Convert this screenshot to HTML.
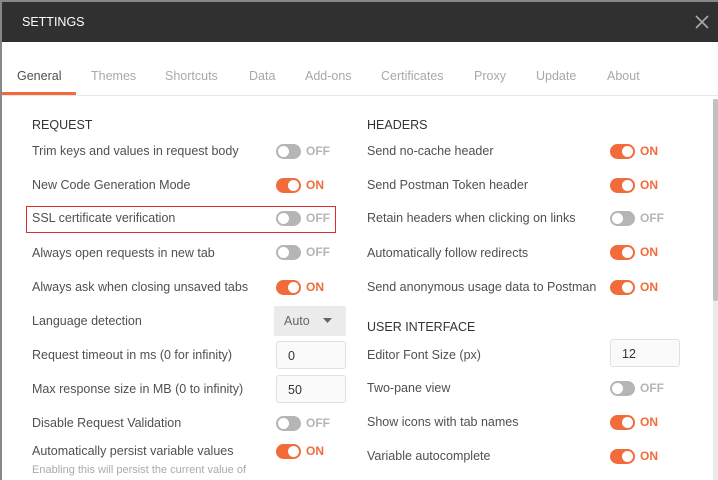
<!DOCTYPE html>
<html><head><style>
*{margin:0;padding:0;box-sizing:border-box}
body{width:718px;height:480px;overflow:hidden;background:#fff;font-family:"Liberation Sans",sans-serif;position:relative}
.a{position:absolute;white-space:nowrap}
.lb{font-size:12.5px;color:#505050}
.h{font-size:12.5px;color:#333}
.tab{font-size:12.5px;color:#a8a8a8;top:69px}
.tg{position:absolute;width:25px;height:15px;border-radius:8px}
.tg.on{background:#f26b3a}.tg.off{background:#b5b5b5}
.tg::after{content:"";position:absolute;top:2px;width:11px;height:11px;border-radius:50%;background:#fff}
.tg.on::after{right:2px}.tg.off::after{left:2px}
.st{position:absolute;font-size:12px;font-weight:bold}
.st.on{color:#f26b3a}.st.off{color:#b5b5b5}
.inp{position:absolute;width:70px;height:28px;border:1px solid #e0e0e0;background:#fafafa;border-radius:3px;font-size:12.5px;color:#333;padding:7px 0 0 11px}
</style></head><body>
<div class="a" style="left:0;top:0;width:2px;height:480px;background:#888"></div>
<div class="a" style="left:0;top:0;width:718px;height:2px;background:#888"></div>
<div class="a" style="left:2px;top:2px;width:716px;height:40px;background:#303030"></div>
<div class="a" style="left:22px;top:15px;color:#fff;font-size:12.5px">SETTINGS</div>
<svg class="a" style="left:695px;top:15px" width="14" height="14"><path d="M1 1L13 13M13 1L1 13" stroke="#aaa" stroke-width="1.6"/></svg>
<div class="a tab" style="left:17px;color:#505050">General</div>
<div class="a tab" style="left:91px">Themes</div>
<div class="a tab" style="left:165px">Shortcuts</div>
<div class="a tab" style="left:249px">Data</div>
<div class="a tab" style="left:305px">Add-ons</div>
<div class="a tab" style="left:381px">Certificates</div>
<div class="a tab" style="left:474px">Proxy</div>
<div class="a tab" style="left:536px">Update</div>
<div class="a tab" style="left:607px">About</div>
<div class="a" style="left:2px;top:95px;width:716px;height:1px;background:#e6e6e6"></div>
<div class="a" style="left:2px;top:92px;width:74px;height:3px;background:#f26b3a"></div>
<div class="a" style="left:713px;top:99px;width:5px;height:381px;background:#ebebeb"></div>
<div class="a" style="left:713px;top:99px;width:5px;height:202px;background:#c1c1c1;border-radius:2px"></div>

<div class="a h" style="left:32px;top:118px">REQUEST</div>
<div class="a h" style="left:367px;top:118px">HEADERS</div>
<div class="a h" style="left:367px;top:320px">USER INTERFACE</div>

<div class="a" style="left:26px;top:206px;width:310px;height:27px;border:1px solid #d9302c"></div>

<div class="a lb" style="left:32px;top:144px">Trim keys and values in request body</div>
<div class="tg off" style="left:276px;top:144px"></div><div class="st off" style="left:306px;top:144px">OFF</div>
<div class="a lb" style="left:32px;top:178px">New Code Generation Mode</div>
<div class="tg on" style="left:276px;top:178px"></div><div class="st on" style="left:306px;top:178px">ON</div>
<div class="a lb" style="left:32px;top:211px">SSL certificate verification</div>
<div class="tg off" style="left:276px;top:211px"></div><div class="st off" style="left:306px;top:211px">OFF</div>
<div class="a lb" style="left:32px;top:246px">Always open requests in new tab</div>
<div class="tg off" style="left:276px;top:245px"></div><div class="st off" style="left:306px;top:245px">OFF</div>
<div class="a lb" style="left:32px;top:280px">Always ask when closing unsaved tabs</div>
<div class="tg on" style="left:276px;top:280px"></div><div class="st on" style="left:306px;top:280px">ON</div>
<div class="a lb" style="left:32px;top:314px">Language detection</div>
<div class="a" style="left:274px;top:306px;width:72px;height:30px;background:#ebebeb"></div>
<div class="a" style="left:284px;top:314px;font-size:12.5px;color:#666">Auto</div>
<svg class="a" style="left:323px;top:318px" width="9" height="6"><path d="M0 0H9L4.5 5Z" fill="#666"/></svg>
<div class="a lb" style="left:32px;top:348px">Request timeout in ms (0 for infinity)</div>
<div class="inp" style="left:276px;top:341px">0</div>
<div class="a lb" style="left:32px;top:382px">Max response size in MB (0 to infinity)</div>
<div class="inp" style="left:276px;top:375px">50</div>
<div class="a lb" style="left:32px;top:416px">Disable Request Validation</div>
<div class="tg off" style="left:276px;top:416px"></div><div class="st off" style="left:306px;top:416px">OFF</div>
<div class="a lb" style="left:32px;top:444px">Automatically persist variable values</div>
<div class="tg on" style="left:276px;top:444px"></div><div class="st on" style="left:306px;top:444px">ON</div>
<div class="a" style="left:32px;top:464px;font-size:11px;color:#aaa">Enabling this will persist the current value of</div>

<div class="a lb" style="left:367px;top:144px">Send no-cache header</div>
<div class="tg on" style="left:610px;top:144px"></div><div class="st on" style="left:640px;top:144px">ON</div>
<div class="a lb" style="left:367px;top:178px">Send Postman Token header</div>
<div class="tg on" style="left:610px;top:178px"></div><div class="st on" style="left:640px;top:178px">ON</div>
<div class="a lb" style="left:367px;top:211px">Retain headers when clicking on links</div>
<div class="tg off" style="left:610px;top:211px"></div><div class="st off" style="left:640px;top:211px">OFF</div>
<div class="a lb" style="left:367px;top:246px">Automatically follow redirects</div>
<div class="tg on" style="left:610px;top:245px"></div><div class="st on" style="left:640px;top:245px">ON</div>
<div class="a lb" style="left:367px;top:280px">Send anonymous usage data to Postman</div>
<div class="tg on" style="left:610px;top:280px"></div><div class="st on" style="left:640px;top:280px">ON</div>
<div class="a lb" style="left:367px;top:348px">Editor Font Size (px)</div>
<div class="inp" style="left:610px;top:339px">12</div>
<div class="a lb" style="left:367px;top:381px">Two-pane view</div>
<div class="tg off" style="left:610px;top:381px"></div><div class="st off" style="left:640px;top:381px">OFF</div>
<div class="a lb" style="left:367px;top:415px">Show icons with tab names</div>
<div class="tg on" style="left:610px;top:415px"></div><div class="st on" style="left:640px;top:415px">ON</div>
<div class="a lb" style="left:367px;top:449px">Variable autocomplete</div>
<div class="tg on" style="left:610px;top:449px"></div><div class="st on" style="left:640px;top:449px">ON</div>
</body></html>
